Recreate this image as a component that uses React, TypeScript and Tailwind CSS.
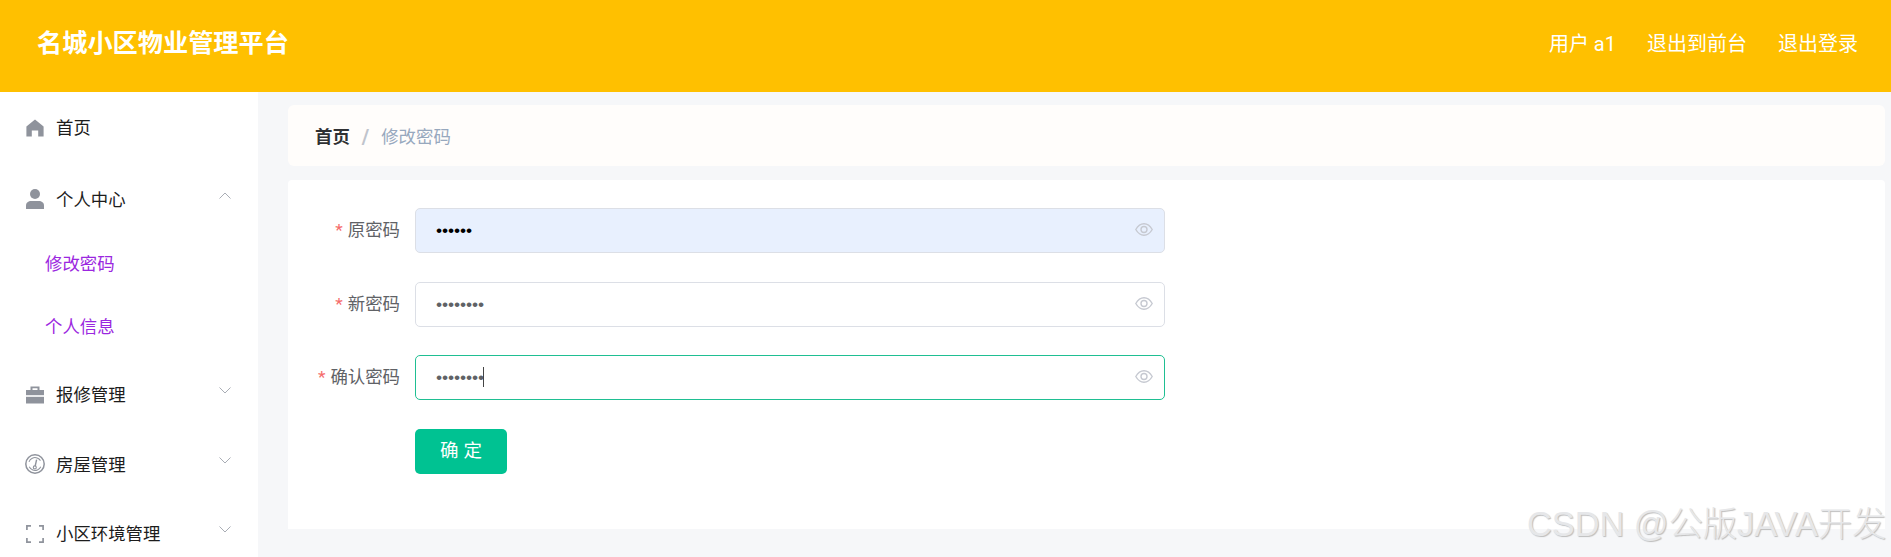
import React from 'react';

const cjk = "font-['Roboto','Noto_Sans_CJK_SC',sans-serif]";

const HomeIcon = () => (
	<svg viewBox="0 0 18 18" className="h-[18px] w-[18px]" fill="#8f939c">
		<path d="M9 0.5 L17.6 7.6 V17.5 H12.2 V11.4 H5.8 V17.5 H0.4 V7.6 Z" />
	</svg>
);

const UserIcon = () => (
	<svg viewBox="0 0 18 20" className="h-[20px] w-[18px]" fill="#8f939c">
		<circle cx="9" cy="5" r="5" />
		<path d="M0 20 V16.5 C0 13.5 2.5 12 5 12 H13 C15.5 12 18 13.5 18 16.5 V20 Z" />
	</svg>
);

const CaseIcon = () => (
	<svg viewBox="0 0 18 18" className="h-[18px] w-[18px]" fill="#8f939c">
		<path d="M4.5 4 V0.5 H13.5 V4 H11.5 V2.2 H6.5 V4 Z" />
		<path d="M0 4 H18 V9.2 H0 Z" />
		<path d="M0 10.8 H18 V17.5 H0 Z" />
	</svg>
);

const GaugeIcon = () => (
	<svg viewBox="0 0 20 20" className="-ml-px h-[20px] w-[20px]" fill="none" stroke="#8f939c">
		<circle cx="10" cy="10" r="9.2" strokeWidth="1.5" />
		<circle cx="10" cy="10" r="6.4" strokeWidth="1" strokeDasharray="14 6.2" transform="rotate(200 10 10)" />
		<path d="M11.6 5.6 L10.2 12" strokeWidth="1.4" />
		<circle cx="9.8" cy="13.4" r="1.5" strokeWidth="1.1" />
	</svg>
);

const FrameIcon = () => (
	<svg viewBox="0 0 18 18" className="h-[18px] w-[18px]" fill="none" stroke="#8f939c" strokeWidth="1.7">
		<path d="M0.9 5 V0.9 H5 M13 0.9 H17.1 V5 M17.1 13 V17.1 H13 M5 17.1 H0.9 V13" />
	</svg>
);

const Chevron = ({ up }: { up?: boolean }) => (
	<svg viewBox="0 0 12 7" className="mb-2 ml-auto mr-[27px] h-[7px] w-[12px]" fill="none" stroke="#a9adb5" strokeWidth="1">
		<path d={up ? 'M0.5 6.5 L6 1 L11.5 6.5' : 'M0.5 0.5 L6 6 L11.5 0.5'} />
	</svg>
);

const EyeIcon = () => (
	<svg viewBox="0 0 18 13" className="h-[13px] w-[18px] shrink-0 -translate-y-px" fill="none" stroke="#c6c9d1" strokeWidth="1.4">
		<path d="M0.8 6.5 C3 2.6 5.8 0.8 9 0.8 C12.2 0.8 15 2.6 17.2 6.5 C15 10.4 12.2 12.2 9 12.2 C5.8 12.2 3 10.4 0.8 6.5 Z" />
		<circle cx="9" cy="6.5" r="3" />
	</svg>
);

const MenuRow = ({
	icon,
	label,
	chevron,
	className,
	labelClass = '',
}: {
	icon: React.ReactNode;
	label: string;
	chevron?: 'up' | 'down';
	className: string;
	labelClass?: string;
}) => (
	<div className={`flex items-center pl-[26px] text-[17.4px] text-[#1c1c1c] ${className}`}>
		<span className="flex w-[30px] shrink-0 items-center">{icon}</span>
		<span className={labelClass}>{label}</span>
		{chevron && <Chevron up={chevron === 'up'} />}
	</div>
);

const SubRow = ({ label }: { label: string }) => (
	<div className="flex h-[63px] items-center pl-[45px] pt-[2px] text-[17.4px] text-[#9b27e0]">{label}</div>
);

const FormRow = ({
	label,
	dots,
	className,
	valueClass,
	caret,
}: {
	label: string;
	dots: number;
	className: string;
	valueClass: string;
	caret?: boolean;
}) => (
	<div className="flex h-[45px] items-center">
		<label className="flex w-[127px] shrink-0 items-center justify-end pr-[15px] text-[17.4px] text-[#606266]">
			<span className="mr-[5px] text-[#f56c6c]">*</span>
			{label}
		</label>
		<div className={`relative flex h-[45px] w-[750px] items-center rounded-[5px] border pl-[20px] pr-[11px] ${className}`}>
			<input
				type="password"
				readOnly
				value={'x'.repeat(dots)}
				className={`min-w-0 flex-1 bg-transparent font-['Liberation_Sans',sans-serif] text-[17.4px] tracking-[-0.1px] outline-none ${valueClass}`}
			/>
			{caret && <span className="absolute left-[67px] top-[11px] h-[20px] w-px bg-[#444]" />}
			<EyeIcon />
		</div>
	</div>
);

export default function App() {
	return (
		<div className={`flex h-[557px] w-[1891px] flex-col overflow-hidden bg-[#f6f7f9] ${cjk}`}>
			<header className="flex h-[92px] shrink-0 items-center justify-between bg-[#ffc000] pb-[4px] pl-[37px] pr-[33px] text-white">
				<h1 className="text-[25.2px] font-bold">名城小区物业管理平台</h1>
				<nav className="flex items-center gap-[31px] text-[20px]">
					<span>用户 a1</span>
					<span>退出到前台</span>
					<span>退出登录</span>
				</nav>
			</header>
			<div className="flex min-h-0 flex-1">
				<aside className="w-[258px] shrink-0 overflow-hidden bg-white">
					<MenuRow icon={<HomeIcon />} label="首页" className="mb-[2px] h-[72px]" />
					<MenuRow icon={<UserIcon />} label="个人中心" chevron="up" className="h-[66px]" labelClass="pt-[2px]" />
					<SubRow label="修改密码" />
					<SubRow label="个人信息" />
					<MenuRow icon={<CaseIcon />} label="报修管理" chevron="down" className="mt-[2px] h-[69.5px]" />
					<MenuRow icon={<GaugeIcon />} label="房屋管理" chevron="down" className="h-[69.5px]" labelClass="pt-[2px]" />
					<MenuRow icon={<FrameIcon />} label="小区环境管理" chevron="down" className="h-[69.5px]" />
				</aside>
				<main className="min-w-0 flex-1 pl-[30px] pr-[6px] pt-[13px]">
					<div className="flex h-[61px] items-center rounded-[6px] bg-[#fffdfb] pl-[27px] pt-[3px] text-[17.4px]">
						<span className="font-bold text-[#303133]">首页</span>
						<span className="ml-[12px] mr-[12px] text-[20px] font-bold leading-none text-[#c0c4cc]">/</span>
						<span className="text-[#97a8be]">修改密码</span>
					</div>
					<section className="mt-[14px] flex h-[349px] flex-col gap-[28.5px] rounded-t-[4px] bg-white pt-[28px]">
						<FormRow label="原密码" dots={6} className="border-[#dcdfe6] bg-[#e8f0fe]" valueClass="text-black" />
						<FormRow label="新密码" dots={8} className="border-[#dcdfe6] bg-white" valueClass="text-[#606266]" />
						<FormRow label="确认密码" dots={8} caret className="border-[#1fbf92] bg-white" valueClass="text-[#606266]" />
						<div className="pl-[127px]">
							<button className="h-[45px] w-[92px] rounded-[5px] bg-[#00c292] pl-[5px] pt-[2px] text-[18.5px] tracking-[5px] text-white">
								确定
							</button>
						</div>
					</section>
				</main>
			</div>
			<div className="pointer-events-none absolute left-[1527px] top-[502px] whitespace-nowrap font-['Liberation_Sans','Noto_Sans_CJK_SC',sans-serif] text-[34.3px] font-light leading-[44px] text-[#e6e7e9] [text-shadow:1px_1px_1px_#bdbdbd]">
				CSDN @公版JAVA开发
			</div>
		</div>
	);
}
